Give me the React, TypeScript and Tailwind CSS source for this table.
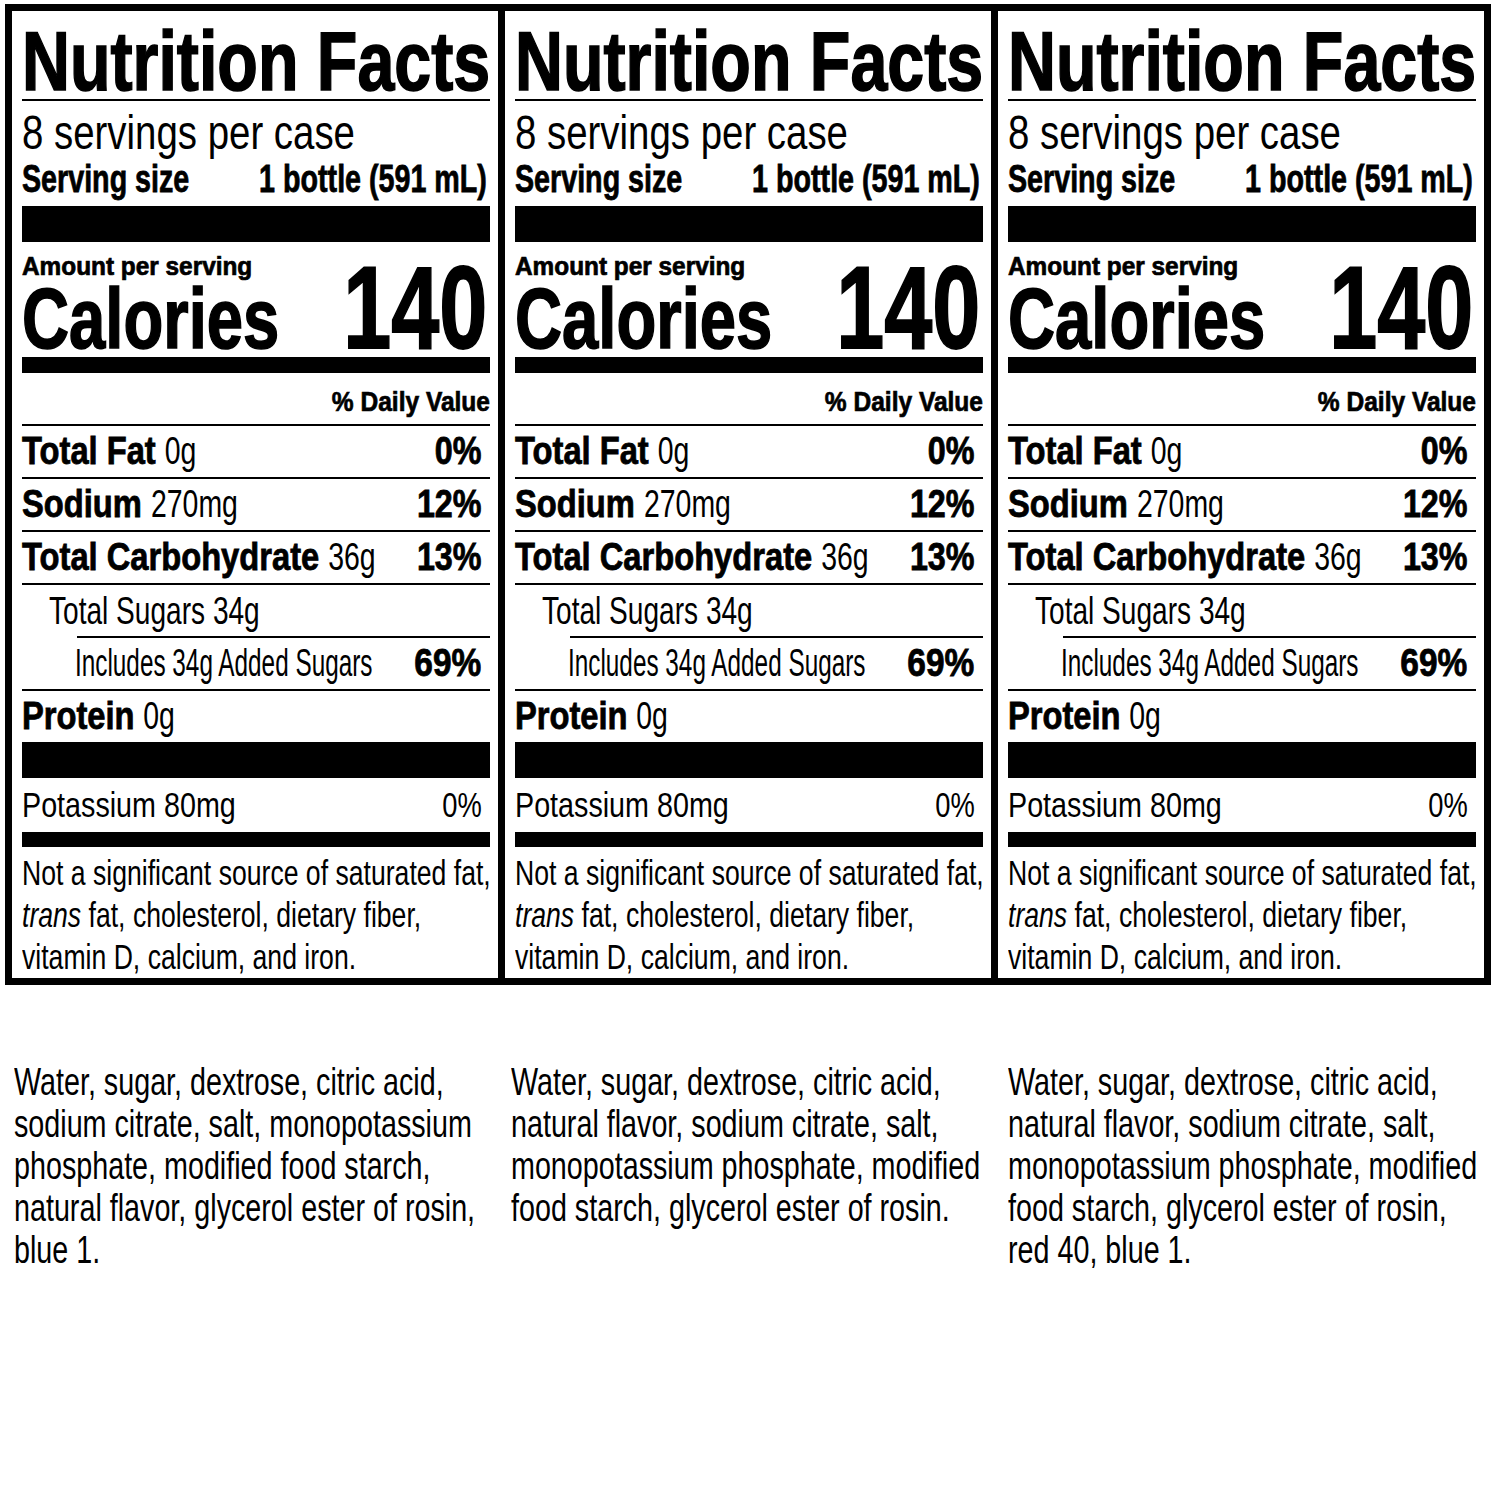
import React from "react";

const ingredients = [
  [
    "Water, sugar, dextrose, citric acid,",
    "sodium citrate, salt, monopotassium",
    "phosphate, modified food starch,",
    "natural flavor, glycerol ester of rosin,",
    "blue 1.",
  ],
  [
    "Water, sugar, dextrose, citric acid,",
    "natural flavor, sodium citrate, salt,",
    "monopotassium phosphate, modified",
    "food starch, glycerol ester of rosin.",
  ],
  [
    "Water, sugar, dextrose, citric acid,",
    "natural flavor, sodium citrate, salt,",
    "monopotassium phosphate, modified",
    "food starch, glycerol ester of rosin,",
    "red 40, blue 1.",
  ],
];

function Rule({ className = "" }: { className?: string }) {
  return <div className={`h-[2px] bg-black ${className}`} />;
}

// bold label + regular amount, the amount squeezed a bit more than the label
function NutrientRow({ label, amount, pct }: { label: string; amount: string; pct?: string }) {
  return (
    <div className="flex h-[51px] leading-[51px] text-[38px] whitespace-nowrap">
      <div className="flex-1 min-w-0 origin-left scale-x-[0.86]">
        <span className="font-bold [-webkit-text-stroke:0.8px_#000]">{label}</span>{" "}
        <span className="inline-block origin-left scale-x-[0.87]">{amount}</span>
      </div>
      {pct && (
        <div className="shrink-0 font-bold pr-[10px] origin-right scale-x-[0.85] [-webkit-text-stroke:0.8px_#000]">{pct}</div>
      )}
    </div>
  );
}

function Panel() {
  return (
    <div className="w-[486px] shrink-0 pl-[10px] pr-[8px] pt-[14px] flex flex-col whitespace-nowrap">
      <div className="text-[84px] leading-[72px] font-bold origin-left scale-x-[0.79] [-webkit-text-stroke:1.6px_#000]">
        Nutrition Facts
      </div>
      <Rule className="mt-[2px]" />
      <div className="text-[48px] leading-[44px] mt-[10px] origin-left scale-x-[0.8]">8 servings per case</div>
      <div className="flex text-[39px] leading-[38px] font-bold mt-[5px] pr-[3px] [-webkit-text-stroke:0.8px_#000]">
        <div className="flex-1 min-w-0 origin-left scale-x-[0.735]">Serving size</div>
        <div className="shrink-0 origin-right scale-x-[0.735]">1 bottle (591 mL)</div>
      </div>
      <div className="h-[36px] bg-black mt-[8px]" />

      <div className="flex items-end mt-[10px]">
        <div className="flex-1 min-w-0 flex flex-col">
          <div className="text-[25px] leading-[28px] font-bold origin-left scale-x-[0.975] [-webkit-text-stroke:0.7px_#000]">
            Amount per serving
          </div>
          <div className="text-[85px] leading-[62px] font-bold mt-[8px] origin-left scale-x-[0.767] [-webkit-text-stroke:1.6px_#000]">
            Calories
          </div>
        </div>
        <div className="shrink-0 text-[116px] leading-[83px] font-bold pr-[3px] origin-right scale-x-[0.744] [-webkit-text-stroke:1.8px_#000]">
          140
        </div>
      </div>
      <div className="h-[16px] bg-black mt-[7px]" />

      <div className="text-[28px] leading-[30px] font-bold text-right mt-[14px] origin-right scale-x-[0.876] [-webkit-text-stroke:0.7px_#000]">
        % Daily Value
      </div>
      <Rule className="mt-[7px]" />
      <NutrientRow label="Total Fat" amount="0g" pct="0%" />
      <Rule />
      <NutrientRow label="Sodium" amount="270mg" pct="12%" />
      <Rule />
      <NutrientRow label="Total Carbohydrate" amount="36g" pct="13%" />
      <Rule />
      <div className="flex h-[51px] leading-[51px] pl-[27px]">
        <div className="text-[39px] origin-left scale-x-[0.72]">Total Sugars 34g</div>
      </div>
      <Rule className="ml-[55px]" />
      <div className="flex h-[51px] leading-[51px] pl-[53px] text-[38px]">
        <div className="flex-1 min-w-0 origin-left scale-x-[0.64]">Includes 34g Added Sugars</div>
        <div className="shrink-0 font-bold pr-[10px] origin-right scale-x-[0.88] [-webkit-text-stroke:0.8px_#000]">69%</div>
      </div>
      <Rule />
      <NutrientRow label="Protein" amount="0g" />
      <div className="h-[36px] bg-black" />
      <div className="flex h-[54px] leading-[54px] text-[35px]">
        <div className="flex-1 min-w-0 origin-left scale-x-[0.82]">Potassium 80mg</div>
        <div className="shrink-0 pr-[10px] origin-right scale-x-[0.78]">0%</div>
      </div>
      <div className="h-[15px] bg-black" />
      <div className="mt-[5px] text-[35px] leading-[42px] origin-left scale-x-[0.76]">
        Not a significant source of saturated fat,
        <br />
        <i>trans</i> fat, cholesterol, dietary fiber,
        <br />
        vitamin D, calcium, and iron.
      </div>
    </div>
  );
}

export default function App() {
  return (
    <div className="w-[1500px] h-[1500px] bg-white text-black font-['Liberation_Sans',Arial,sans-serif] pt-[4px] pl-[5px] overflow-hidden">
      <div className="flex w-fit h-[981px] border-[7px] border-black">
        <Panel />
        <div className="w-[7px] bg-black" />
        <Panel />
        <div className="w-[7px] bg-black" />
        <Panel />
      </div>
      <div className="flex pl-[9px] mt-[76px]">
        {ingredients.map((col, i) => (
          <div key={i} className="w-[497px] shrink-0">
            <div className="text-[39px] leading-[42px] whitespace-nowrap origin-left scale-x-[0.736]">
              {col.map((line, j) => (
                <div key={j}>{line}</div>
              ))}
            </div>
          </div>
        ))}
      </div>
    </div>
  );
}
